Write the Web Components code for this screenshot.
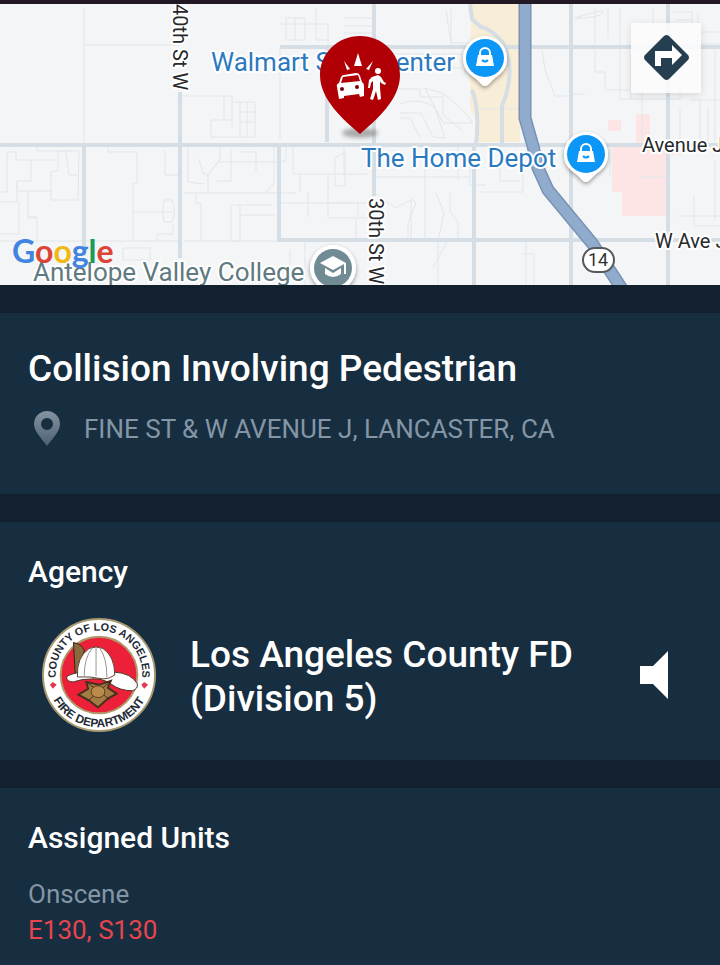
<!DOCTYPE html>
<html lang="en">
<head>
<meta charset="utf-8">
<meta name="viewport" content="width=device-width, initial-scale=1">
<title>Incident</title>
<style>
    body {
        margin: 0;
        min-height: 100vh;
        background: #172d40;
        color: #fff;
        font-family: Roboto, "Noto Sans", sans-serif;
    }
</style>
</head>
<body>

<incident-map></incident-map>

<incident-card>
    <h1 slot="heading">Collision Involving Pedestrian</h1>
    <incident-address>FINE ST &amp; W AVENUE J, LANCASTER, CA</incident-address>
</incident-card>

<incident-card>
    <h2 slot="heading">Agency</h2>
    <agency-row>Los Angeles County FD (Division 5)</agency-row>
</incident-card>

<incident-card>
    <h2 slot="heading">Assigned Units</h2>
    <unit-status><span slot="status">Onscene</span>E130, S130</unit-status>
</incident-card>

<script>
function makeTemplate(html) {
    const template = document.createElement("template");
    template.innerHTML = html;
    return template;
}

function define(name, html) {
    const template = makeTemplate(html);
    customElements.define(name, class extends HTMLElement {
        constructor() {
            super();
            this.attachShadow({ mode: "open" });
            this.shadowRoot.appendChild(template.content.cloneNode(true));
        }
    });
}

define("incident-map", /*html*/`
<style>
    :host {
        display: block;
        position: relative;
        border-top: 4px solid #231924;
        background: #f4f5f7;
    }

    .map {
        display: block;
        width: 100%;
        height: 281px;
        font-family: Roboto, "Noto Sans", sans-serif;
    }

    .minor { fill: none; stroke: #e2e6ea; stroke-width: 1; }
    .major { fill: none; stroke: #d5dee5; stroke-width: 4; }
    .label { font-size: 26px; stroke: #fff; stroke-width: 4px; stroke-linejoin: round; paint-order: stroke; }
    .place { fill: #2b7abf; }
    .school { fill: #5f7a80; }
    .street { fill: #26282b; font-size: 20px; }
    .logo { font: bold 32px Lato, sans-serif; }

    button {
        position: absolute;
        top: 19px;
        right: 19px;
        width: 70px;
        height: 70px;
        padding: 11px;
        border: none;
        background: rgba(252, 252, 252, .88);
        box-shadow: 0 2px 8px rgba(0, 0, 0, .12);
        cursor: pointer;
    }

    button svg {
        display: block;
    }
</style>

<svg class="map" viewBox="0 4 720 281" preserveAspectRatio="xMidYMid slice">
    <defs>
        <filter id="soft" x="-30%" y="-30%" width="160%" height="160%">
            <feDropShadow dx="0" dy="2" stdDeviation="2" flood-opacity=".4"/>
        </filter>
        <filter id="blur" x="-30%" y="-80%" width="160%" height="260%">
            <feGaussianBlur stdDeviation="2"/>
        </filter>
        <g id="shop">
            <path d="M0 -22a22 22 0 0 1 22 22c0 10-5 15-12 20-4 3-7 8-10 8s-6-5-10-8c-7-5-12-10-12-20a22 22 0 0 1 22-22z" fill="#fff" filter="url(#soft)"/>
            <circle r="19" fill="#0c97f7"/>
            <path d="M-7-3H7L9 8H-9z" fill="#fff"/>
            <path d="M-5-2v-3a5 5 0 0 1 10 0v3" fill="none" stroke="#fff" stroke-width="2"/>
            <path d="M-3 2q3 3 6 0" fill="none" stroke="#0c97f7" stroke-width="2"/>
        </g>
    </defs>

    <!-- land use -->
    <path d="M472 4H520V142H476V120L470 108V50z" fill="#f8edd6"/>
    <path d="M608 120h13v11h-13zM636 114h14v27h32v14h-15v61h-45v-24h-10v-47h24z" fill="#fde5e5"/>

    <!-- small streets -->
    <path class="minor" d="M84 8V144M84 45H180M180 96h52v31M211 137v-17h21M211 137h29M224 96v24M232 102h8
        M7 192v-40h9v8h15v21H17v10h34v9h27l1-49H58v20h-2l-5 1v20M56 160H31M37 144v7h33M66 152l3 23h10M0 202h17M8 192H0
        M17 182v20h2v31M28 191v27h9v23M28 217h9M0 234h20M0 241H180M108 145v7h29v31h-4v58M134 212h39M164 200h8q5 12 0 22h-8q-3-10 0-22M157 241v-7h16v-10M165 150v25h13
        M188 148v34l16 2M199 159l4 14 5 2 10-13h13M220 144v15l-12 16v17M217 181h14v-32M184 193h112M184 241h96M196 193v10h5v38M123 248h27v12h-27zM231 162h50M231 205h9v36h-9z"/>
    <path class="minor" d="M280 24h48v120M286 40V18h19v22zM295 18v22M316 8v32h13M344 18h28M344 26h28M344 33h28M280 47V140M240 102h15v35h-15zM240 112h15M240 122h15M247 102v35
        M240 152h16v20M278 145v18l8-3v-15M293 145v29h75M335 158l10-6v34h-10zM328 174v44h47M300 174v18M280 203h95M308 192v25M328 203l30 0v14M344 145v30M240 205h32M266 193l8-10V145M240 215h35M356 218v22
        M375 193l20 15 16-8v40M411 198l5 5-8 20v18M425 145v95M436 193l8 20-6 28M450 193v19l8 10v18M375 177h95M470 150v35h16M458 145v35M448 240l-15 28M290 250v30M305 241v44M438 242v43"/>
    <path class="minor" d="M398 89h22v8h22M400 104q20-8 35 4l10 30-12-1-12-24H400M400 118h10l10 20M423 88l20 5q24 20 30 30l-30 0-18-35zM443 95v20l20 16M451 8v35h20M446 10l5 33M395 54h70v20M400 68h62
        M570 54v40l15 0M542 50l3 20 10 26h15M595 50v22h10v18h26M575 18q38-12 25-3-14 4-25 3M620 8v91h60v-50M631 54v45M642 50v90M653 8v50M672 12h20v20h28M676 20h15M595 8v36M608 8v30M698 14v30h22M690 100h30M700 100v42M708 108v34M715 50v92
        M570 240v45M526 240v45M534 254h-12M534 254v31M610 143v34M638 177h28M678 216h42M694 196v30h26M715 160v60M480 192h43v-33M500 148v33h20M480 109h37M680 109v34"/>

    <!-- avenues -->
    <path class="major" d="M0 145H720M84 145V256M180 92V258M401 4" />
    <path class="major" d="M374 4V196M279 145V240H720M327 46V142M280 47H720M474 145V285M571 4V285M668 4V285"/>
    <path class="major" d="M480 26q16 6 24 18 12 30-2 62v38M470 4l2 15 10 9M472 90q8 20 4 55"/>

    <!-- highway -->
    <path d="M525 4V118L533 146 538 168 548 190 592 243 622 289" fill="none" stroke="#7792b3" stroke-width="13"/>
    <path d="M525 4V118L533 146 538 168 548 190 592 243 622 289" fill="none" stroke="#91abcc" stroke-width="10"/>
    <rect x="583" y="248" width="31" height="24" rx="12" fill="#fff" stroke="#55595e" stroke-width="2"/>
    <text x="598" y="266" text-anchor="middle" font-size="18" fill="#333">14</text>

    <!-- labels -->
    <text class="label place" x="211" y="71">Walmart Supercenter</text>
    <text class="label place" x="361" y="167">The Home Depot</text>
    <text class="label school" x="33" y="281">Antelope Valley College</text>
    <text class="label street" transform="translate(173 4) rotate(90)">40th St W</text>
    <text class="label street" transform="translate(369 198) rotate(90)">30th St W</text>
    <text class="label street" x="642" y="152">Avenue J</text>
    <text class="label street" x="655" y="248">W Ave J</text>

    <use href="#shop" x="485" y="58"/>
    <use href="#shop" x="586" y="154"/>

    <circle cx="333" cy="268" r="23" fill="#fff" filter="url(#soft)"/>
    <circle cx="333" cy="268" r="19" fill="#708b94"/>
    <path d="M320 263l13-7 13 7-13 7zM325 268l8 5 8-5v6q-8 6-16 0z" fill="#fff"/>
    <path d="M345 263v11" stroke="#fff" stroke-width="2"/>

    <text class="logo" x="12" y="263"><tspan fill="#4285e0">G</tspan><tspan fill="#db4437">o</tspan><tspan fill="#f0b911">o</tspan><tspan fill="#4285e0">g</tspan><tspan fill="#1a9b57">l</tspan><tspan fill="#db4437">e</tspan></text>

    <!-- incident pin -->
    <ellipse cx="360" cy="133" rx="18" ry="5" fill="#777" opacity=".6" filter="url(#blur)"/>
    <path d="M360 36c22 0 40 17 40 39 0 25-24 45-40 59-16-14-40-34-40-59 0-22 18-39 40-39z" fill="#b00006"/>
    <g fill="#fff">
        <path d="M354 66l4-13 4 13zM344 61l6 8-3 1zM373 61l-4 9-3-1z"/>
        <path fill-rule="evenodd" d="M341 77Q342 75 344 75L356 73Q359 73 360 76L362 82Q364 83 364 86V96L360 97 359 94 344 96V98L339 99 337 87Q336 84 339 83zM341 83L360 81 358 75 343 77z"/>
        <circle cx="378" cy="71" r="3"/>
        <path d="M372 77L378 75 381 77 384 82 386 83 385 85 381 83 380 81V88L381 99 378 100 376 91 373 100 370 99 373 89V81L371 83 370 88H368L369 80z"/>
    </g>
    <circle cx="342" cy="89" r="2" fill="#7a0008"/>
    <circle cx="357" cy="87" r="2" fill="#7a0008"/>
</svg>

<button type="button" aria-label="Directions">
    <svg width="48" height="48" viewBox="0 0 48 48">
        <path d="M22 2q2.500-2 5 0l19 19q2 2.500 0 5l-19 19q-2.500 2-5 0l-19-19q-2-2.500 0-5z" fill="#263f50"/>
        <path d="M13 32V17H30V11L40 21 30 31V24H19V32z" fill="#fff"/>
    </svg>
</button>
`);

define("incident-card", /*html*/`
<style>
    :host {
        display: block;
        padding: 32px 28px 28px;
        border-top: 28px solid #12212d;
    }

    ::slotted(h1) {
        margin: 0 0 18px;
        font-size: 37px;
        font-weight: 500;
        line-height: 48px;
    }

    ::slotted(h2) {
        margin: 0;
        font-size: 30px;
        font-weight: 500;
        line-height: 36px;
    }
</style>

<section>
    <slot name="heading"></slot>
    <slot></slot>
</section>
`);

define("incident-address", /*html*/`
<style>
    :host {
        display: flex;
        align-items: center;
        gap: 24px;
        padding: 0 0 19px 6px;
        color: #8496a5;
        font-size: 26px;
        line-height: 36px;
    }

    svg {
        flex: none;
    }
</style>

<svg width="26" height="36" viewBox="0 0 26 36" aria-hidden="true">
    <defs>
        <linearGradient id="fade" x2="0" y2="1">
            <stop offset="0" stop-color="#8493a1"/>
            <stop offset="1" stop-color="#4c6173"/>
        </linearGradient>
    </defs>
    <path fill="url(#fade)" fill-rule="evenodd" d="M13 0a13 13 0 0 1 13 13c0 7-7 14-13 22C7 27 0 20 0 13A13 13 0 0 1 13 0zM13 7a6 6 0 1 0 0 12a6 6 0 0 0 0-12z"/>
</svg>
<span><slot></slot></span>
`);

define("agency-row", /*html*/`
<style>
    :host {
        display: flex;
        align-items: center;
        gap: 34px;
        padding: 28px 10px 0 14px;
        font-size: 37px;
        font-weight: 500;
        line-height: 44px;
    }

    svg {
        display: block;
        flex: none;
    }

    .seal {
        font: bold 12px "Liberation Sans", Arial, sans-serif;
    }

    .name {
        flex: 1;
        max-width: 400px;
        padding-top: 4px;
    }

    button {
        margin-left: auto;
        padding: 14px;
        border: none;
        background: none;
        cursor: pointer;
    }
</style>

<svg class="seal" width="114" height="114" viewBox="0 0 116 116">
    <defs>
        <path id="upper" d="M15 66A44 44 0 1 1 101 66"/>
        <path id="lower" d="M5 58A53 53 0 0 0 111 58"/>
    </defs>
    <circle cx="58" cy="58" r="57" fill="#fff" stroke="#a89a70" stroke-width="2"/>
    <circle cx="58" cy="58" r="39" fill="#ec2038" stroke="#b09a6c" stroke-width="2"/>
    <text fill="#222a35" font-size="11" text-anchor="middle"><textPath href="#upper" startOffset="50%">COUNTY OF LOS ANGELES</textPath></text>
    <text fill="#222a35" text-anchor="middle"><textPath href="#lower" startOffset="50%">FIRE DEPARTMENT</textPath></text>
    <path d="M11 65l4 3-4 4-3-4zM104 65l4 3-4 4-3-4z" fill="#e23a52"/>
    <!-- helmet -->
    <path d="M32 25q8 1 11 8l-5 25-4 3z" fill="#8a6a3c" stroke="#33261a"/>
    <path d="M25 61q0-3 10-5l38-1q18 1 24 12 1 5-5 7-13 0-22-7-9-6-20-5-10 0-18 3-6 0-7-4z" fill="#fff" stroke="#4a3325"/>
    <path d="M36 60q-1-20 12-29 7-3 14 0 12 8 12 27-5 4-12 4-14-3-26-2z" fill="#fff" stroke="#5a4434"/>
    <path d="M43 59q0-19 8-28M55 59v-29M66 60q0-19-7-29" fill="none" stroke="#9a938c"/>
    <!-- badge -->
    <path d="M45 65l13 3 12-4-3 7 9 6-9 5-10 9-9-7-11-6 10-6z" fill="#a37c43" stroke="#46301c" stroke-width="2"/>
    <path d="M45 65l24 18M70 64L46 85" stroke="#46301c"/>
    <ellipse cx="57" cy="75" rx="7" ry="6" fill="#b98c4d" stroke="#5c3d20"/>
</svg>
<span class="name"><slot></slot></span>
<button type="button" aria-label="Play audio">
    <svg width="28" height="48" viewBox="0 0 28 48">
        <path d="M0 15H13L28 0V48L13 33H0z" fill="#fff"/>
    </svg>
</button>
`);

define("unit-status", /*html*/`
<style>
    :host {
        display: flex;
        flex-direction: column;
        padding-top: 20px;
        font-size: 26px;
        line-height: 36px;
    }

    .status {
        color: #8496a5;
    }

    .units {
        color: #e6454d;
    }
</style>

<span class="status"><slot name="status"></slot></span>
<span class="units"><slot></slot></span>
`);
</script>
</body>
</html>
